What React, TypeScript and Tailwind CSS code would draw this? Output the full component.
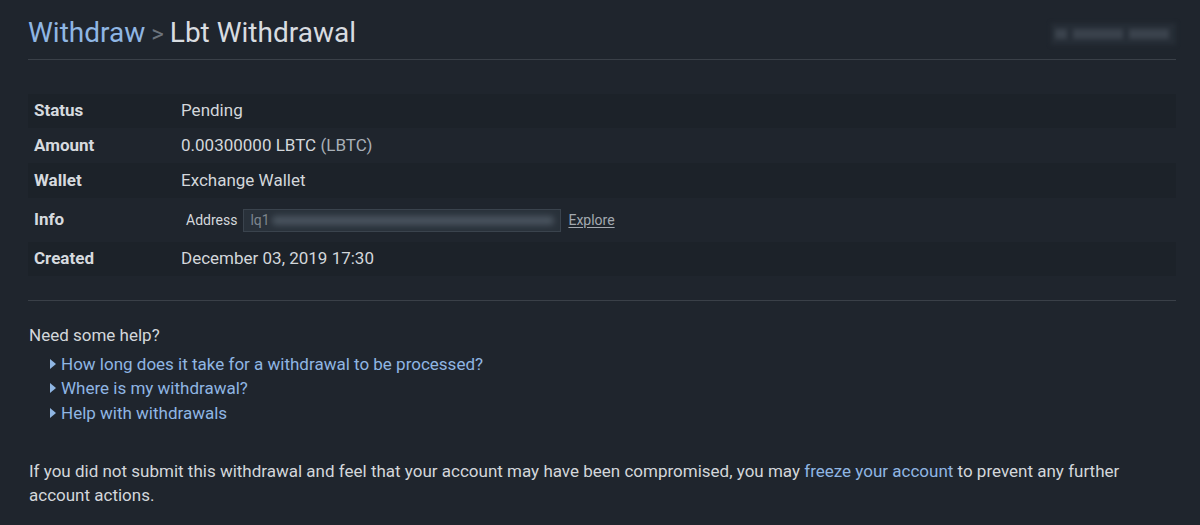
const rows: {label: string; value: React.ReactNode; h: string}[] = [
  {label: 'Status', value: 'Pending', h: 'h-[34px]'},
  {
    label: 'Amount',
    h: 'h-[35px]',
    value: (
      <>
        0.00300000 LBTC <span className="text-[#a9b0b8]">(LBTC)</span>
      </>
    ),
  },
  {label: 'Wallet', value: 'Exchange Wallet', h: 'h-[35px]'},
  {
    label: 'Info',
    h: 'h-[44px]',
    value: (
      <div className="flex items-center text-[14px]">
        <span className="ml-[5px] mr-[6px] text-[#d4d8dc]">Address</span>
        <div className="flex h-[23px] w-[318px] items-center overflow-hidden border border-[#3a434d] bg-[#29313a] px-[6px] text-[#7d858e]">
          <span>lq1</span>
          <span className="ml-[2px] h-[9px] w-[300px] rounded-sm bg-[#4a545f] blur-[3px]" />
        </div>
        <a className="ml-[7px] text-[#a3a9b0] underline underline-offset-2">Explore</a>
      </div>
    ),
  },
  {label: 'Created', value: 'December 03, 2019 17:30', h: 'h-[34px]'},
];

const helpLinks = [
  'How long does it take for a withdrawal to be processed?',
  'Where is my withdrawal?',
  'Help with withdrawals',
];

export default function App() {
  return (
    <div
      className="h-[525px] w-[1200px] overflow-hidden bg-[#1f252d] pl-[28px] pr-[24px] text-[17px] text-[#d3d7db]"
      style={{fontFamily: 'Roboto, "Liberation Sans", sans-serif'}}
    >
      {/* header */}
      <div className="flex items-center justify-between border-b border-[#3a4048] pb-[7px] pt-[15px]">
        <h1 className="text-[28px] leading-[36px] font-normal">
          <span className="text-[#8fb6e3]">Withdraw</span>
          <span className="mx-[6px] text-[24px] text-[#6b737c]">&gt;</span>
          <span className="text-[#d8dce0]">Lbt Withdrawal</span>
        </h1>
        <div className="flex h-[22px] w-[125px] items-center gap-[6px] bg-[#262d36] px-[4px] blur-[2px]">
          <span className="h-[10px] w-[12px] bg-[#3a424c]" />
          <span className="h-[10px] w-[50px] bg-[#39414b]" />
          <span className="h-[10px] w-[40px] bg-[#3a424c]" />
        </div>
      </div>

      {/* details table */}
      <div className="mt-[34px] border-b border-[#3a4048] pb-[24px]">
        {rows.map((r, i) => (
          <div key={r.label} className={`flex items-center ${r.h} ${i % 2 === 0 ? 'bg-[#1c2229]' : ''}`}>
            <div className="w-[153px] pl-[6px] font-bold text-[#d6dadf]">{r.label}</div>
            <div className="text-[#d3d7db]">{r.value}</div>
          </div>
        ))}
      </div>

      {/* help */}
      <div className="mt-[22px] leading-[24.5px]">
        <p className="pl-[1px]">Need some help?</p>
        <ul className="mt-[4px] pl-[22px]">
          {helpLinks.map((t) => (
            <li key={t} className="flex items-center text-[#8fb6e3]">
              <svg viewBox="0 0 6 10" className="mr-[5px] h-[10px] w-[6px] fill-[#8fb6e3]">
                <path d="M0 0 L6 5 L0 10 Z" />
              </svg>
              <a>{t}</a>
            </li>
          ))}
        </ul>
      </div>

      <p className="mt-[34px] pl-[1px] leading-[24px]">
        If you did not submit this withdrawal and feel that your account may have been compromised, you may{' '}
        <a className="text-[#8fb6e3]">freeze your account</a> to prevent any further account actions.
      </p>
    </div>
  );
}
